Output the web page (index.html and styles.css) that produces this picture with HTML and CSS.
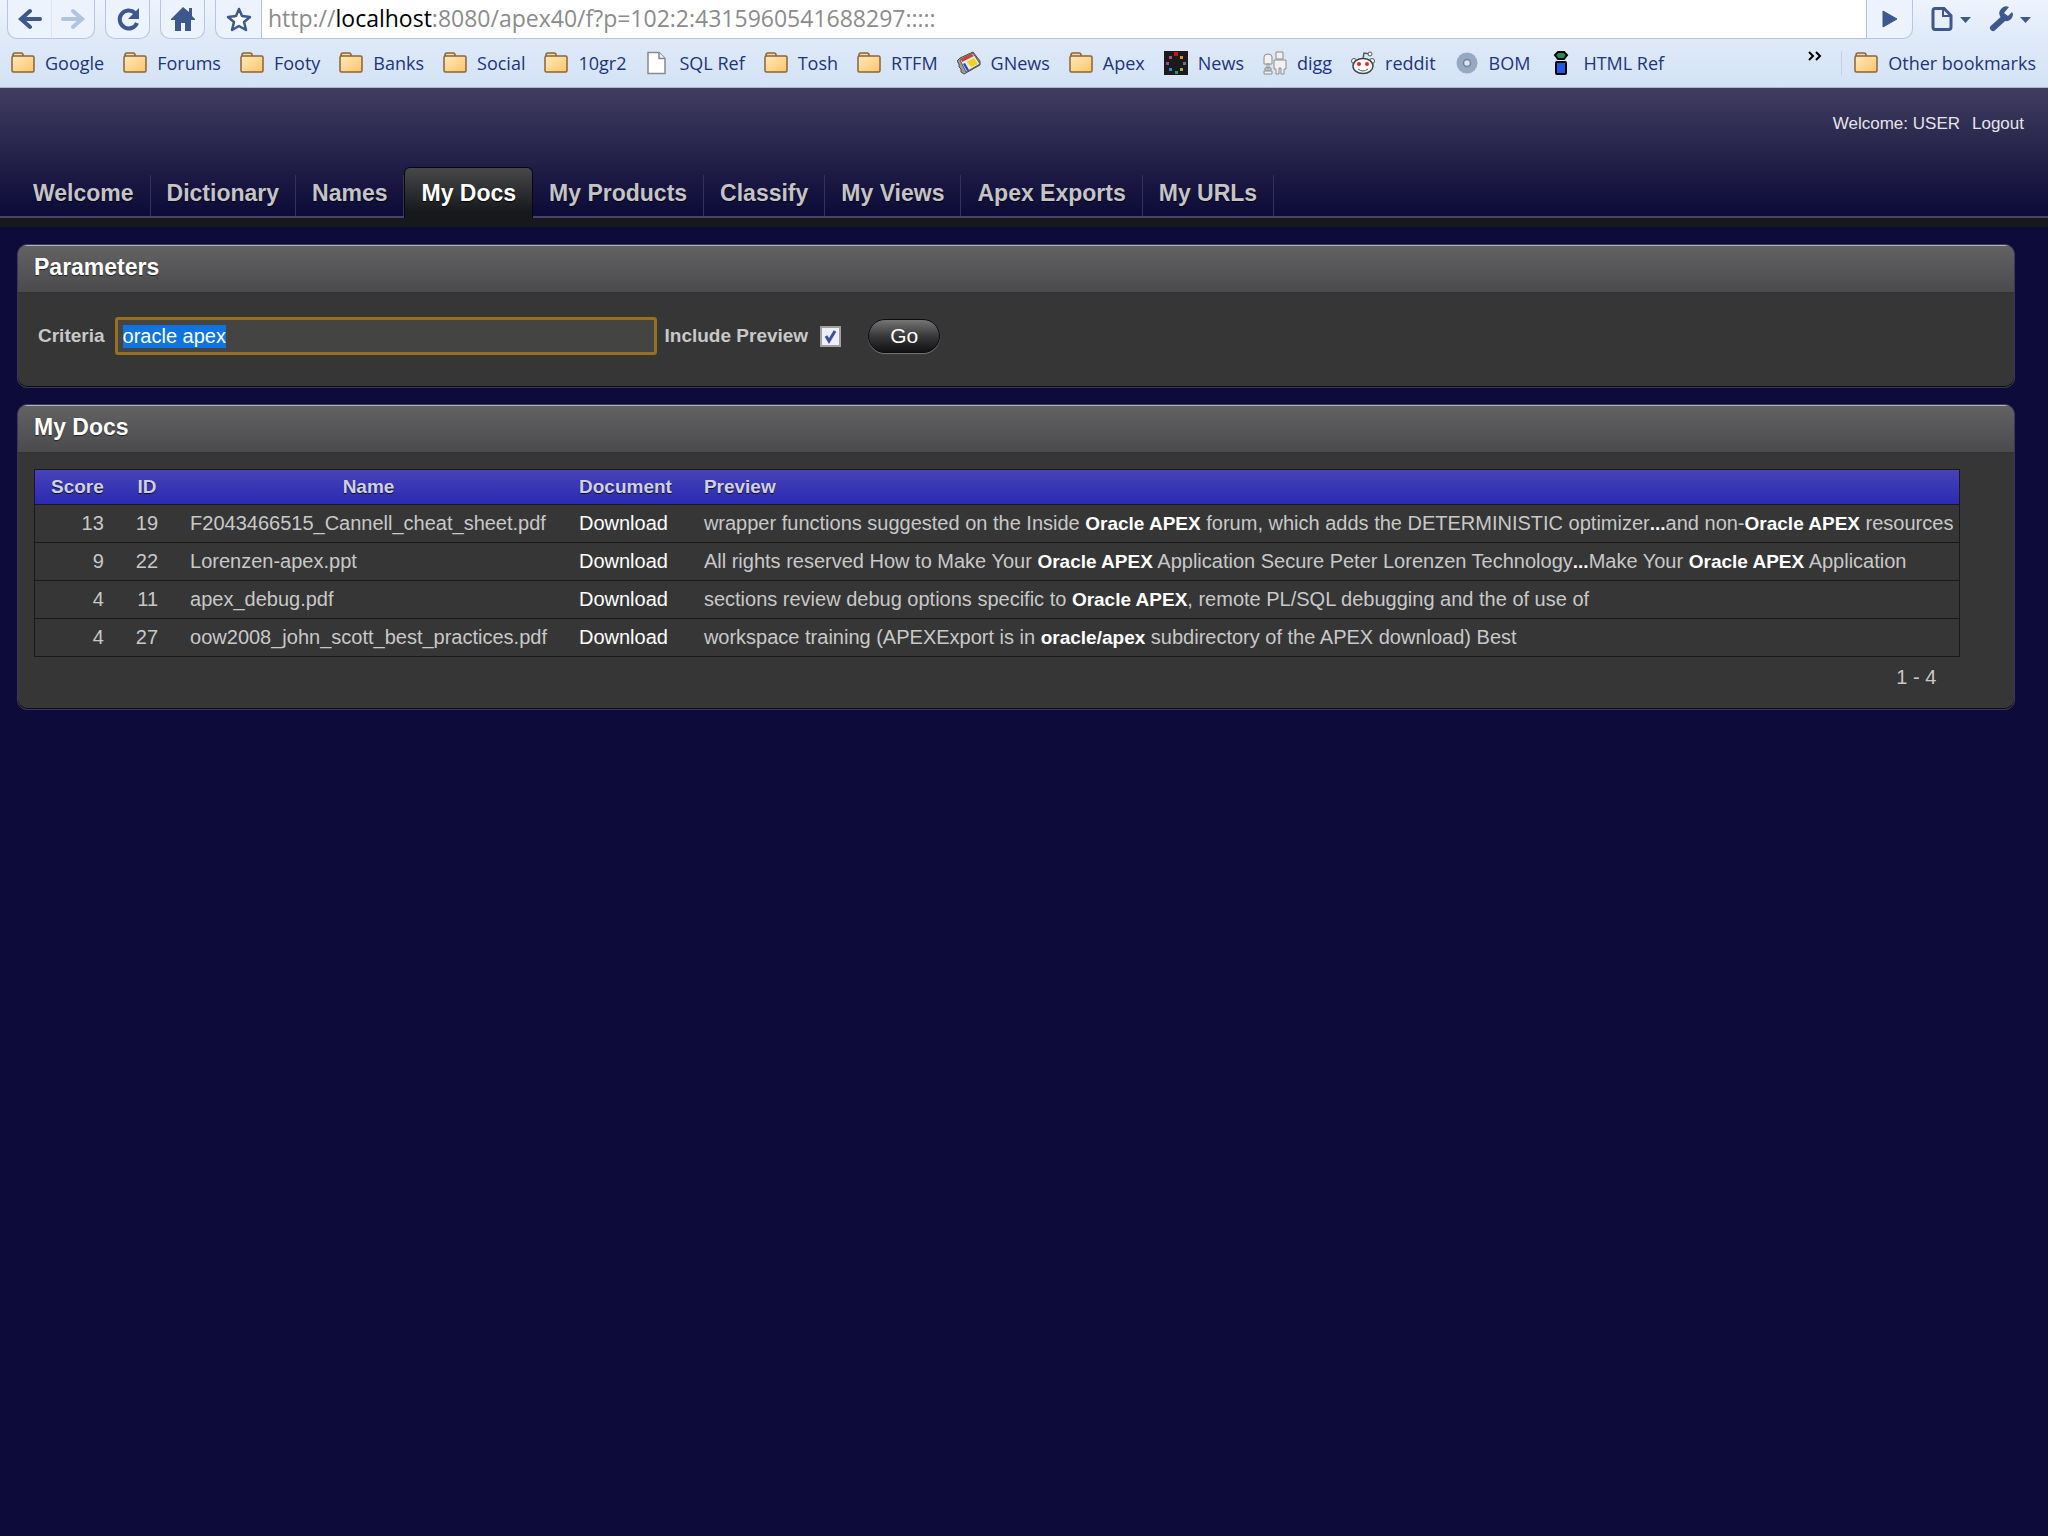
FILE: index.html
```html
<!DOCTYPE html>
<html lang="en">
<head>
    <meta charset="UTF-8">
    <meta name="viewport" content="width=device-width, initial-scale=1.0">
    <title>My Docs</title>
    <link rel="stylesheet" href="styles.css">
</head>
<body>
    <!-- shared icons -->
    <svg class="defs" width="0" height="0">
        <defs>
            <linearGradient id="folderFill" x1="0" y1="0" x2="1" y2="1">
                <stop offset="0" stop-color="#ffe9bd"/>
                <stop offset="1" stop-color="#fbc469"/>
            </linearGradient>
            <symbol id="folder" viewBox="0 0 24 24">
                <path d="M2 6V4q0-2 2-2h6q2 0 2 2v2" fill="#f3d9a4" stroke="#8a6436" stroke-width="1.5"/>
                <rect x="1" y="5" width="22" height="16" rx="1.5" fill="url(#folderFill)" stroke="#8a6436" stroke-width="1.5"/>
            </symbol>
        </defs>
    </svg>

    <div class="chrome">
        <div class="toolbar">
            <div class="btn-group">
                <button class="tool back" aria-label="Back">
                    <svg width="24" height="22" viewBox="0 0 24 22"><path d="M22 11H4M12 3L3 11l9 8" fill="none" stroke="#3d578f" stroke-width="4" stroke-linecap="round"/></svg>
                </button>
                <button class="tool forward" aria-label="Forward">
                    <svg width="24" height="22" viewBox="0 0 24 22"><path d="M2 11h18M12 3l9 8-9 8" fill="none" stroke="#b2c2e2" stroke-width="4" stroke-linecap="round"/></svg>
                </button>
            </div>
            <div class="btn-group">
                <button class="tool" aria-label="Reload">
                    <svg width="26" height="26" viewBox="0 0 26 26"><path d="M20 7a9 9 0 1 0 2 10" fill="none" stroke="#3d578f" stroke-width="4"/><path d="M24 2v11H13z" fill="#3d578f"/></svg>
                </button>
            </div>
            <div class="btn-group">
                <button class="tool" aria-label="Home">
                    <svg width="26" height="26" viewBox="0 0 26 26"><path d="M13 1L1 13v1h4v11h6v-8h4v8h6V14h4v-1l-3-3V2h-3v4z" fill="#3d578f"/></svg>
                </button>
            </div>
            <div class="omnibox">
                <button class="tool star" aria-label="Bookmark this page">
                    <svg width="28" height="26" viewBox="0 0 28 26"><path d="M14 3l3 7 8 1-6 5 2 8-7-4-7 4 2-8-6-5 8-1z" fill="#fff" stroke="#3d578f" stroke-width="2.5" stroke-linejoin="round"/></svg>
                </button>
                <div class="url">http://<span>localhost</span>:8080/apex40/f?p=102:2:4315960541688297:::::</div>
                <button class="tool go" aria-label="Go to address">
                    <svg width="16" height="20" viewBox="0 0 16 20"><path d="M1 2l14 8-14 8z" fill="#3d578f" stroke="#3d578f" stroke-linejoin="round"/></svg>
                </button>
            </div>
            <button class="menu" aria-label="Page menu">
                <svg width="40" height="26" viewBox="0 0 40 26"><path d="M4 2.500h9l7 7V21q0 2.500-2.500 2.500H4Q2 23.500 2 21V5q0-2.500 2-2.500z" fill="none" stroke="#3d578f" stroke-width="3"/><path d="M12 3v7h8" fill="none" stroke="#3d578f" stroke-width="2"/><path d="M29 11h11l-5.500 6z" fill="#3d578f"/></svg>
            </button>
            <button class="menu" aria-label="Tools menu">
                <svg width="42" height="26" viewBox="0 0 42 26"><path d="M4 22L15 12" stroke="#3d578f" stroke-width="6" stroke-linecap="round"/><path d="M20 1q-5-2-8 2-3 3-1 7 3 6 8 5 5-2 5-7l-1-2-4 4-4-3z" fill="#3d578f"/><path d="M31 11h11l-5.500 6z" fill="#3d578f"/></svg>
            </button>
        </div>

        <div class="bookmarks">
            <a href="#"><svg class="ico"><use href="#folder"/></svg>Google</a>
            <a href="#"><svg class="ico"><use href="#folder"/></svg>Forums</a>
            <a href="#"><svg class="ico"><use href="#folder"/></svg>Footy</a>
            <a href="#"><svg class="ico"><use href="#folder"/></svg>Banks</a>
            <a href="#"><svg class="ico"><use href="#folder"/></svg>Social</a>
            <a href="#"><svg class="ico"><use href="#folder"/></svg>10gr2</a>
            <a href="#"><svg class="ico" viewBox="0 0 24 24"><path d="M3 1.500h11l6 6v15H3z" fill="#fff" stroke="#858a92" stroke-width="1.500"/><path d="M14 1.500v6h6" fill="#eee" stroke="#858a92" stroke-width="1.500"/></svg>SQL Ref</a>
            <a href="#"><svg class="ico"><use href="#folder"/></svg>Tosh</a>
            <a href="#"><svg class="ico"><use href="#folder"/></svg>RTFM</a>
            <a href="#"><svg class="ico" viewBox="0 0 24 24"><path d="M0 10l2 3v3l2 2v3l3 2 16-9v-4L16 1 3 7z" fill="#9b9b9b" stroke="#4a4a4a"/><path d="M3 9l13-7 7 11-14 8z" fill="#e9e9e9" stroke="#5a5a5a"/><path d="M4 8l11-5 2 2-12 6z" fill="#d8402f"/><path d="M10 11l7-4 4 6-7 3z" fill="#f2cf1c"/><path d="M6 13l2-1 4 7-2 1z" fill="#2a45c8"/></svg>GNews</a>
            <a href="#"><svg class="ico"><use href="#folder"/></svg>Apex</a>
            <a href="#"><svg class="ico" viewBox="0 0 24 24"><path d="M0 0h24v24H0z" fill="#1b1b1d"/><path d="M10 1h4v4h-4z" fill="#c81414"/><path d="M16 5h3v3h-3z" fill="#e0901c"/><path d="M19 11h3v3h-3z" fill="#5d7b80"/><path d="M16 17h3v3h-3z" fill="#a3b03a"/><path d="M11 20h3v3h-3z" fill="#1c9a6c"/><path d="M5 17h3v3H5z" fill="#1e94d8"/><path d="M2 11h3v3H2z" fill="#8a4aa8"/><path d="M5 5h3v3H5z" fill="#c0428c"/></svg>News</a>
            <a href="#"><svg class="ico" viewBox="0 0 24 24"><g fill="#f1f1f1" stroke="#8c8c8c"><path d="M13 1h7v7h-7z"/><path d="M11 9h12v9h-2v5h-3v-6h-2v6h-3v-5h-2z"/><path d="M1 13V6q0-3 4-3t4 3v7z"/><path d="M4 13h2v4H4zM2 17h6v2H2zM1 20h8v3H1z"/></g></svg>digg</a>
            <a href="#"><svg class="ico" viewBox="0 0 24 24"><path d="M12 8l1-6 6 1" fill="none" stroke="#555" stroke-width="1.500"/><circle cx="19" cy="3" r="2" fill="#fff" stroke="#555"/><circle cx="3" cy="10" r="2.500" fill="#fff" stroke="#555"/><circle cx="21" cy="10" r="2.500" fill="#fff" stroke="#555"/><ellipse cx="12" cy="15" rx="10" ry="7.500" fill="#fff" stroke="#444" stroke-width="1.500"/><circle cx="8" cy="13" r="2" fill="#e8281e"/><circle cx="16" cy="13" r="2" fill="#e8281e"/><path d="M7 18q5 4 10 0" fill="none" stroke="#555"/></svg>reddit</a>
            <a href="#"><svg class="ico" viewBox="0 0 24 24"><circle cx="12" cy="12" r="10.500" fill="#97a9c0"/><circle cx="12" cy="12" r="3.500" fill="#dbe5f2" stroke="#71839c" stroke-width="1.500"/></svg>BOM</a>
            <a href="#"><svg class="ico" viewBox="0 0 24 24"><path d="M9 1h6l3 3-3 4H9L6 4z" fill="#248a5d" stroke="#000" stroke-width="2"/><rect x="7" y="11" width="10" height="12" rx="1" fill="#2458e6" stroke="#000" stroke-width="2"/></svg>HTML Ref</a>
            <button class="more" aria-label="More bookmarks"><svg width="14" height="10" viewBox="0 0 14 10"><path d="M1 1l4 4-4 4M8 1l4 4-4 4" fill="none" stroke="#000" stroke-width="2"/></svg></button>
            <a href="#" class="other"><svg class="ico"><use href="#folder"/></svg>Other bookmarks</a>
        </div>
    </div>

    <div class="header">
        <div class="user">
            <span>Welcome: USER</span>
            <a href="#">Logout</a>
        </div>
        <ul class="tabs">
            <li><a href="#">Welcome</a></li>
            <li><a href="#">Dictionary</a></li>
            <li><a href="#">Names</a></li>
            <li class="current"><a href="#">My Docs</a></li>
            <li><a href="#">My Products</a></li>
            <li><a href="#">Classify</a></li>
            <li><a href="#">My Views</a></li>
            <li><a href="#">Apex Exports</a></li>
            <li><a href="#">My URLs</a></li>
        </ul>
    </div>

    <div class="content">
        <div class="region">
            <h2>Parameters</h2>
            <form class="params">
                <label for="criteria">Criteria</label>
                <input type="text" id="criteria" value="oracle apex">
                <label for="preview">Include Preview</label>
                <input type="checkbox" id="preview" checked>
                <button type="button" class="go-btn">Go</button>
            </form>
        </div>

        <div class="region">
            <h2>My Docs</h2>
            <div class="report">
                <table>
                    <thead>
                        <tr>
                            <th>Score</th>
                            <th>ID</th>
                            <th>Name</th>
                            <th>Document</th>
                            <th class="preview">Preview</th>
                        </tr>
                    </thead>
                    <tbody>
                        <tr>
                            <td class="num">13</td>
                            <td class="num">19</td>
                            <td>F2043466515_Cannell_cheat_sheet.pdf</td>
                            <td><a href="#">Download</a></td>
                            <td class="preview">wrapper functions suggested on the Inside <b>Oracle APEX</b> forum, which adds the DETERMINISTIC optimizer<b>...</b>and non-<b>Oracle APEX</b> resources</td>
                        </tr>
                        <tr>
                            <td class="num">9</td>
                            <td class="num">22</td>
                            <td>Lorenzen-apex.ppt</td>
                            <td><a href="#">Download</a></td>
                            <td class="preview">All rights reserved How to Make Your <b>Oracle APEX</b> Application Secure Peter Lorenzen Technology<b>...</b>Make Your <b>Oracle APEX</b> Application</td>
                        </tr>
                        <tr>
                            <td class="num">4</td>
                            <td class="num">11</td>
                            <td>apex_debug.pdf</td>
                            <td><a href="#">Download</a></td>
                            <td class="preview">sections review debug options specific to <b>Oracle APEX</b>, remote PL/SQL debugging and the of use of</td>
                        </tr>
                        <tr>
                            <td class="num">4</td>
                            <td class="num">27</td>
                            <td>oow2008_john_scott_best_practices.pdf</td>
                            <td><a href="#">Download</a></td>
                            <td class="preview">workspace training (APEXExport is in <b>oracle/apex</b> subdirectory of the APEX download) Best</td>
                        </tr>
                    </tbody>
                </table>
                <div class="pages">1 - 4</div>
            </div>
        </div>
    </div>

    <script>
        window.onload = function(){
            // the criteria is focused and selected on load
            document.getElementById("criteria").select();
        }
    </script>
</body>
</html>
```

FILE: styles.css
```css
*{
    margin: 0;
    padding: 0;
    box-sizing: border-box;
}
body{
    background-color: #0d0b39;
    font-family: "Liberation Sans", Arial, sans-serif;
    font-size: 20px;
    color: #c8c8c8;
}
a{
    color: #fff;
    text-decoration: none;
}
button{
    border: none;
    background: none;
    font-family: inherit;
}
.defs{
    position: absolute;
}

/* browser bars */
.chrome{
    height: 88px;
    background: linear-gradient(#eef4fd, #dfe9f8 45%, #d3e3f5);
    border-bottom: 1px solid #a9b8cc;
    font-family: "Open Sans", "Noto Sans", sans-serif;
}
.toolbar{
    display: flex;
    height: 39px;
    padding: 0 17px 0 7px;
}
.btn-group{
    display: flex;
    margin-right: 10px;
    border: 1px solid #b8c5e0;
    border-top: none;
    border-radius: 0 0 10px 10px;
    background-color: #edf3fc;
}
.tool{
    display: flex;
    align-items: center;
    justify-content: center;
    width: 43px;
    height: 37px;
}
.forward{
    border-left: 1px solid #dce5f4;
}
.omnibox{
    flex: 1;
    display: flex;
    border: 1px solid #b8c5e0;
    border-top: none;
    border-radius: 0 0 10px 10px;
    background-color: #edf3fc;
}
.star, .go{
    width: 45px;
}
.url{
    flex: 1;
    padding-left: 6px;
    border-left: 1px solid #b8c5e0;
    border-right: 1px solid #b8c5e0;
    background-color: #fff;
    font-size: 23px;
    line-height: 37px;
    color: #8c8c8c;
}
.url span{
    color: #000;
}
.menu{
    margin-left: 18px;
    height: 37px;
}
.menu svg{
    display: block;
}
.bookmarks{
    display: flex;
    align-items: center;
    gap: 19px;
    height: 48px;
    padding: 0 12px 0 11px;
}
.bookmarks a{
    display: flex;
    align-items: center;
    gap: 10px;
    font-size: 18px;
    line-height: 24px;
    color: #1d3480;
    white-space: nowrap;
}
.ico{
    width: 24px;
    height: 24px;
}
.more{
    margin-left: auto;
    margin-bottom: 14px;
}
.more svg{
    display: block;
}
.bookmarks .other{
    padding-left: 12px;
    border-left: 1px solid #c3d0e4;
}

/* application header */
.header{
    height: 139px;
    background: linear-gradient(#403d5f, #0d0b38 125px);
    border-bottom: 9px solid #16181b;
}
.user{
    display: flex;
    justify-content: flex-end;
    gap: 12px;
    padding: 24px 24px 0 0;
    font-size: 17px;
    line-height: 23px;
    color: #e4e4ea;
}
.user a{
    color: #e4e4ea;
}
.tabs{
    display: flex;
    align-items: flex-end;
    margin-top: 32px;
    height: 51px;
    padding-left: 17px;
    border-bottom: 2px solid #46436a;
    list-style: none;
}
.tabs li{
    height: 41px;
    border-right: 1px solid #34315a;
}
.tabs a{
    display: block;
    padding: 0 16px;
    font-size: 23px;
    font-weight: bold;
    line-height: 36px;
    color: #c4c4c8;
    text-shadow: 0 1px 1px #000;
}
.tabs .current{
    height: 51px;
    margin-bottom: -2px;
    padding-top: 7px;
    border: 1px solid #08080c;
    border-bottom: none;
    border-radius: 6px 6px 0 0;
    background: linear-gradient(#48484a, #16181b 44px);
}
.tabs .current a{
    color: #fff;
}

/* regions */
.content{
    padding: 17px 33px 0 17px;
}
.region{
    margin-bottom: 16px;
    border: 1px solid #3b3860;
    border-radius: 10px;
    background-color: #363637;
    box-shadow: inset 0 -1px #0a0a12;
    overflow: hidden;
}
.region h2{
    height: 48px;
    padding-left: 16px;
    border-top: 1px solid #b0b0be;
    border-bottom: 1px solid #333335;
    background: linear-gradient(#626263, #4b4b4d);
    font-size: 23px;
    line-height: 42px;
    color: #fff;
    text-shadow: 0 1px 1px #222;
}
.params{
    display: flex;
    align-items: center;
    height: 94px;
    padding: 0 20px 8px;
}
.params label{
    font-size: 19px;
    font-weight: bold;
}
#criteria{
    width: 542px;
    height: 38px;
    margin: 0 8px 0 10px;
    padding: 0 5px;
    border: 3px solid #94701f;
    border-radius: 3px;
    outline: none;
    background-color: #444443;
    font-family: inherit;
    font-size: 20px;
    color: #fff;
}
#criteria::selection{
    background-color: #0f74e0;
    color: #fff;
}
#preview{
    appearance: none;
    width: 21px;
    height: 21px;
    margin-left: 12px;
    border: 2px solid #a0a0a4;
    background: #eef0f6 url("data:image/svg+xml,%3Csvg xmlns='http://www.w3.org/2000/svg' viewBox='0 0 17 17'%3E%3Cpath d='M4 8l3 5 6-10' fill='none' stroke='%233c4fa0' stroke-width='3'/%3E%3C/svg%3E");
}
.go-btn{
    width: 72px;
    height: 34px;
    margin-left: 27px;
    border: 1px solid #0c0c0c;
    border-radius: 17px;
    background: linear-gradient(#757576, #39393b 50%, #111113);
    box-shadow: 0 1px 1px #77777a;
    font-size: 21px;
    color: #fff;
}
.report{
    width: fit-content;
    padding: 16px 16px 20px;
}
table{
    border-collapse: collapse;
    border: 1px solid #19191b;
}
th, td{
    padding: 0 16px;
    border-bottom: 1px solid #19191b;
    text-align: left;
    white-space: nowrap;
}
th{
    height: 35px;
    font-size: 19px;
    text-align: center;
    color: #cfd0e6;
    text-shadow: 0 1px 1px #111;
}
thead tr{
    background: linear-gradient(#4742b8, #2a2ab2);
}
td{
    height: 38px;
    font-size: 20px;
}
.preview{
    padding-right: 6px;
    text-align: left;
}
.num{
    text-align: right;
}
td b{
    font-size: 19px;
    color: #fff;
}
.pages{
    padding: 8px 24px 0 0;
    line-height: 24px;
    text-align: right;
}
```
